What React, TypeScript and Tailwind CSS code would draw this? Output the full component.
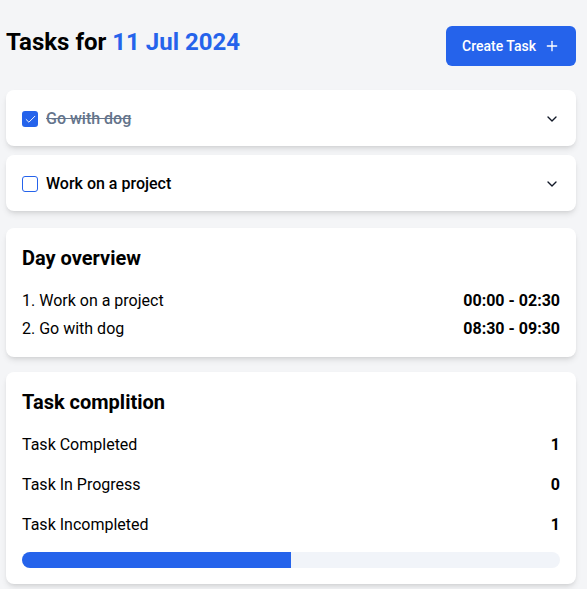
import { Check, ChevronDown, Plus } from "lucide-react";

type Task = {
    id: number;
    title: string;
    done: boolean;
};

const tasks: Task[] = [
    { id: 1, title: "Go with dog", done: true },
    { id: 2, title: "Work on a project", done: false },
];

const overview = [
    { title: "Work on a project", time: "00:00 - 02:30" },
    { title: "Go with dog", time: "08:30 - 09:30" },
];

const stats = [
    { label: "Task Completed", value: 1 },
    { label: "Task In Progress", value: 0 },
    { label: "Task Incompleted", value: 1 },
];

const TaskRow = ({ task }: { task: Task }) => {
    return (
        <div className="flex h-[56px] items-center justify-between rounded-lg bg-white px-4 pt-[2px] shadow-md">
            <div className="flex items-center gap-2">
                {task.done ? (
                    <span className="flex h-4 w-4 items-center justify-center rounded-[3px] bg-[#2563eb]">
                        <Check size={13} strokeWidth={1.75} className="text-white" />
                    </span>
                ) : (
                    <span className="h-4 w-4 rounded-[3px] border border-[#2563eb] bg-white" />
                )}
                <span
                    className={
                        task.done
                            ? "text-base font-medium text-[#64748b] line-through"
                            : "text-base font-medium text-black"
                    }
                >
                    {task.title}
                </span>
            </div>
            <ChevronDown size={16} strokeWidth={2} className="text-[#111827]" />
        </div>
    );
};

export default function App() {
    const completed = 1;
    const total = 2;

    return (
        <div
            className="min-h-[589px] bg-[#f4f5f7] pl-[6px] pr-[11px] pt-[26px] pb-[6px] text-black"
            style={{ fontFamily: "Roboto, 'Noto Sans', sans-serif" }}
        >
            {/* header */}
            <div className="flex items-start justify-between">
                <h1 className="text-2xl font-bold">
                    Tasks for <span className="text-[#2563eb]">11 Jul 2024</span>
                </h1>
                <button className="flex h-10 items-center gap-2 rounded-md bg-[#2563eb] px-4 text-sm font-medium text-white">
                    Create Task
                    <Plus size={16} strokeWidth={2} />
                </button>
            </div>

            {/* task list */}
            <div className="mt-6 flex flex-col gap-[9px]">
                {tasks.map((task) => (
                    <TaskRow key={task.id} task={task} />
                ))}
            </div>

            {/* day overview */}
            <div className="mt-[17px] rounded-lg bg-white p-4 shadow-md">
                <h2 className="text-xl font-bold">Day overview</h2>
                <div className="mt-[17px] flex flex-col gap-1">
                    {overview.map((item, i) => (
                        <div key={i} className="flex items-center justify-between text-base">
                            <span>
                                {i + 1}. {item.title}
                            </span>
                            <span className="font-bold">{item.time}</span>
                        </div>
                    ))}
                </div>
            </div>

            {/* task completion */}
            <div className="mt-[15px] rounded-lg bg-white p-4 shadow-md">
                <h2 className="text-xl font-bold">Task complition</h2>
                <div className="mt-[17px] flex flex-col gap-4">
                    {stats.map((s) => (
                        <div key={s.label} className="flex items-center justify-between text-base">
                            <span>{s.label}</span>
                            <span className="font-bold">{s.value}</span>
                        </div>
                    ))}
                </div>
                <div className="mt-[15px] h-4 w-full overflow-hidden rounded-full bg-[#f1f4f9]">
                    <div
                        className="h-full bg-[#2563eb]"
                        style={{ width: `${(completed / total) * 100}%` }}
                    />
                </div>
            </div>
        </div>
    );
}
